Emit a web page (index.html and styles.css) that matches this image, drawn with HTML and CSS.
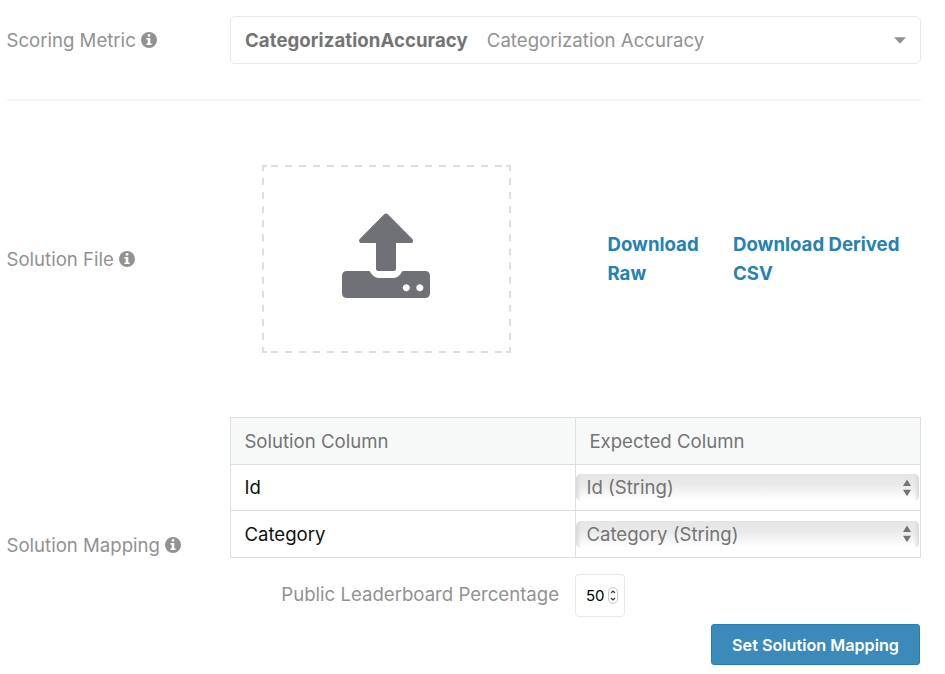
FILE: index.html
```html
<!DOCTYPE html>
<html lang="en">
<head>
<meta charset="utf-8">
<title>Scoring settings</title>
<link rel="stylesheet" href="styles.css">
</head>
<body>
<svg class="defs" width="0" height="0">
  <symbol id="info" viewBox="0 0 16 16">
    <path fill-rule="evenodd" d="M8 0a8 8 0 1 1 0 16A8 8 0 0 1 8 0zM6.7 2.3v2.3h2.6V2.3zM5.4 6v1.6h1.3v3.8H5.4V13h5.2v-1.6H9.3V6z"/>
  </symbol>
  <symbol id="updown" viewBox="0 0 8 18">
    <path d="M4 0.5 8 7H0zM0 10.7h8L4 17.2z"/>
  </symbol>
</svg>
<main class="settings">
  <section class="row metric">
    <div class="label"><span>Scoring Metric</span><svg class="info"><use href="#info"/></svg></div>
    <div class="dropdown">
      <strong>CategorizationAccuracy</strong>
      <span class="description">Categorization Accuracy</span>
      <svg class="caret" viewBox="0 0 12 7"><path d="M0 0.3h12L6 6.8z"/></svg>
    </div>
  </section>
  <section class="row file">
    <div class="label"><span>Solution File</span><svg class="info"><use href="#info"/></svg></div>
    <div class="file-body">
      <div class="dropzone">
        <svg class="outline" viewBox="0 0 249 188">
          <path d="M9 1h231M9 187h231" stroke-dasharray="7 7"/>
          <path d="M1 13v162M248 13v162" stroke-dasharray="7 7.090"/>
          <path d="M5 1H1V6M244 1h4V6M5 187H1v-5M244 187h4v-5"/>
        </svg>
        <svg class="upload" viewBox="0 0 88 85">
          <path d="M42.2 1.2Q44 -.4 45.8 1.2L70.3 26Q72 28.5 70 30H54V55.500Q54 58 51.500 58H36.500Q34 58 34 55.500V30H18.500Q16 28.500 17.700 26z"/>
          <path fill-rule="evenodd" d="M5 58H27.500Q31.500 65 36.500 65H51.500Q57 65 60.500 58H83Q88 58 88 63V80Q88 85 83 85H5Q0 85 0 80V63Q0 58 5 58zM64.300 71.200a3.600 3.600 0 1 0 .01 0zM77.800 71.200a3.600 3.600 0 1 0 .01 0z"/>
        </svg>
      </div>
      <a class="raw">Download Raw</a>
      <a class="derived">Download Derived CSV</a>
    </div>
  </section>
  <section class="row mapping">
    <div class="label"><span>Solution Mapping</span><svg class="info"><use href="#info"/></svg></div>
    <div class="mapping-body">
      <div class="table">
        <div class="cell head"><span>Solution Column</span></div>
        <div class="cell head"><span>Expected Column</span></div>
        <div class="cell"><span>Id</span></div>
        <div class="cell choice"><div class="select"><span>Id (String)</span><svg><use href="#updown"/></svg></div></div>
        <div class="cell"><span>Category</span></div>
        <div class="cell choice"><div class="select"><span>Category (String)</span><svg><use href="#updown"/></svg></div></div>
      </div>
      <div class="percentage">
        <span class="caption">Public Leaderboard Percentage</span>
        <div class="number"><span>50</span>
          <svg viewBox="0 0 10 17"><rect x=".5" y=".5" width="9" height="16" rx="4.500"/><path d="M3 6 5 4l2 2M3 11l2 2 2-2"/></svg>
        </div>
      </div>
      <button class="submit">Set Solution Mapping</button>
    </div>
  </section>
</main>
</body>
</html>
```

FILE: styles.css
```css
* { box-sizing: border-box; }
body {
  margin: 0;
  background: #fff;
  color: #929292;
  font: 400 18.6px/29px Inter, "Liberation Sans", sans-serif;
}
.defs { display: block; }
.settings { width: 920.5px; padding: 16px 0 0 6.5px; }
.row { display: grid; grid-template-columns: 223.5px 690.5px; align-items: center; }
.label { display: flex; align-items: center; gap: 5px; white-space: nowrap; }
.info { width: 16px; height: 16px; fill: #929292; }

.metric { height: 85px; padding-bottom: 35px; border-bottom: 2px solid #f5f5f5; }
.dropdown {
  display: flex;
  align-items: center;
  height: 48px;
  padding: 0 14px;
  border: 1px solid #e9e9e9;
  border-radius: 5px;
}
.dropdown strong { color: #747474; font-weight: 700; letter-spacing: .07px; }
.description { margin-left: 19px; letter-spacing: .02px; }
.caret { width: 12px; height: 7px; margin-left: auto; fill: #929292; }

.file { margin-top: 64px; }
.file-body { display: flex; align-items: center; padding-left: 32px; }
.dropzone { display: grid; place-items: center; width: 249px; height: 188px; }
.dropzone svg { grid-area: 1 / 1; }
.outline { width: 249px; height: 188px; fill: none; stroke: #dedede; stroke-width: 2; }
.upload { width: 88px; height: 85px; fill: #707176; margin: 0 1px 7px 0; }
.file-body a { color: #2582b2; font-weight: 700; }
.raw { width: 100px; margin-left: 96.5px; }
.derived { width: 180px; margin-left: 25.5px; }

.mapping { margin-top: 64px; height: 256px; }
.mapping-body { display: flex; flex-direction: column; width: 690px; height: 256px; }
.table {
  display: grid;
  grid-template-columns: 345px 345px;
  grid-template-rows: 47px 46px 47px;
  width: 691px;
  height: 141px;
  border: solid #dedfdf;
  border-width: 1px 0 0 1px;
}
.cell {
  display: flex;
  align-items: center;
  padding-left: 13.4px;
  border: solid #dedfdf;
  border-width: 0 1px 1px 0;
  color: #111;
}
.head { background: #f7f9f8; color: #747474; }
.choice { padding: 0 1px 0 0; color: #747474; }
.select {
  display: flex;
  align-items: center;
  justify-content: space-between;
  width: 100%;
  height: 27px;
  padding: 0 8px 0 10.4px;
  border-radius: 5px;
  background:
    linear-gradient(to right, #d9d9d9, #d9d9d900 5px),
    linear-gradient(to left, #d9d9d9, #d9d9d900 5px),
    linear-gradient(#e5e5e5, #eaeaea 40%, #fff 95%);
}
.select svg { width: 8px; height: 18px; fill: #747474; }

.percentage { display: flex; align-items: center; height: 43px; margin-top: 16px; }
.caption { width: 329px; padding-bottom: 2px; text-align: right; white-space: nowrap; }
.number {
  display: flex;
  align-items: center;
  gap: 3px;
  width: 50px;
  height: 43px;
  margin-left: 16px;
  padding: 0 0 1px 10px;
  border: 1px solid #e9e9e9;
  border-radius: 4px;
  color: #000;
  font-size: 15px;
}
.number svg { width: 10px; height: 17px; fill: #fff; stroke: #bbb; stroke-width: .8; }
.number svg path { fill: none; stroke: #333; stroke-width: 1.1; }
.submit {
  align-self: flex-end;
  width: 209px;
  height: 41px;
  margin-top: 7px;
  padding: 1px 0 0;
  border: 1px solid #2580b0;
  border-radius: 3px;
  background: #3c8ab9;
  color: #fff;
  font: 600 16.2px Inter, "Liberation Sans", sans-serif;
}
```
